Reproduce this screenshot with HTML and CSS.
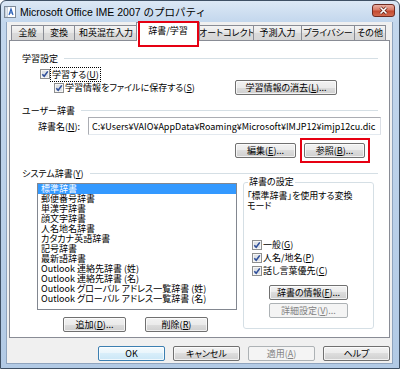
FILE: index.html
```html
<!DOCTYPE html>
<html lang="ja">
<head>
  <meta charset="UTF-8">
  <title>Microsoft Office IME 2007 のプロパティ</title>
  <link rel="stylesheet" href="styles.css">
</head>
<body>
  <svg class="defs" width="0" height="0">
    <symbol id="checked" viewBox="0 0 10 10">
      <rect x="0.5" y="0.5" width="9" height="9" fill="#f6f6f6" stroke="#8e8f8f"/>
      <rect x="2" y="2" width="6" height="6" fill="#dfe2e6"/>
      <path d="M2.3 5.2 L4.2 7.3 L7.8 2.4" fill="none" stroke="#2f4f9a" stroke-width="1.6"/>
    </symbol>
  </svg>

  <div class="window">
    <div class="titlebar">
      <svg class="app-icon" viewBox="0 0 12 12">
        <rect x="0.5" y="0.5" width="11" height="11" fill="#fff" stroke="#7d8a99"/>
        <rect x="1" y="1" width="3" height="10" fill="#c9d3de"/>
        <path d="M2 3h1M2 5h1M2 7h1M2 9h1" stroke="#fff"/>
        <path d="M5 9 L7 3 L9 9 M6 7h2" fill="none" stroke="#2d62b8" stroke-width="1.2"/>
      </svg>
      <span class="title">Microsoft Office IME 2007 のプロパティ</span>
      <div class="close-btn">
        <svg viewBox="0 0 23 13" width="23" height="13">
          <path d="M8.5 3.5 L14.5 9.5 M14.5 3.5 L8.5 9.5" stroke="#5a1d14" stroke-width="3"/>
          <path d="M8.5 3.5 L14.5 9.5 M14.5 3.5 L8.5 9.5" stroke="#fff" stroke-width="1.6"/>
        </svg>
      </div>
    </div>

    <div class="dialog">
      <div class="tabs">
        <div class="tab tab-general">全般</div>
        <div class="tab tab-convert">変換</div>
        <div class="tab tab-mixed">和英混在入力</div>
        <div class="tab tab-dict active">辞書/学習</div>
        <div class="tab tab-autocorrect">オートコレクト</div>
        <div class="tab tab-predict">予測入力</div>
        <div class="tab tab-privacy">プライバシー</div>
        <div class="tab tab-other">その他</div>
      </div>

      <div class="panel">
        <div class="group-head"><span>学習設定</span><i class="rule"></i></div>
        <div class="check learn-main">
          <svg class="cb"><use href="#checked"/></svg>
          <span class="focused">学習する(<u>U</u>)</span>
        </div>
        <div class="learn-row">
          <div class="check learn-sub">
            <svg class="cb"><use href="#checked"/></svg>
            <span>学習情報をファイルに保存する(<u>S</u>)</span>
          </div>
          <button class="btn btn-clear">学習情報の消去(<u>L</u>)...</button>
        </div>

        <div class="group-head user-head"><span>ユーザー辞書</span><i class="rule"></i></div>
        <div class="name-row">
          <span class="name-label">辞書名(<u>N</u>):</span>
          <input class="textbox" type="text" value="C:¥Users¥VAIO¥AppData¥Roaming¥Microsoft¥IMJP12¥imjp12cu.dic" readonly>
        </div>
        <div class="user-buttons">
          <button class="btn btn-small">編集(<u>E</u>)...</button>
          <button class="btn btn-small">参照(<u>B</u>)...</button>
        </div>

        <div class="group-head system-head"><span>システム辞書(<u>Y</u>)</span><i class="rule"></i></div>
        <div class="system-row">
          <div class="system-list">
            <ul class="listbox">
              <li class="selected">標準辞書</li>
              <li>郵便番号辞書</li>
              <li>単漢字辞書</li>
              <li>顔文字辞書</li>
              <li>人名地名辞書</li>
              <li>カタカナ英語辞書</li>
              <li>記号辞書</li>
              <li>最新語辞書</li>
              <li>Outlook 連絡先辞書 (姓)</li>
              <li>Outlook 連絡先辞書 (名)</li>
              <li>Outlook グローバル アドレス一覧辞書 (姓)</li>
              <li>Outlook グローバル アドレス一覧辞書 (名)</li>
            </ul>
            <div class="list-buttons">
              <button class="btn btn-list">追加(<u>D</u>)...</button>
              <button class="btn btn-list">削除(<u>R</u>)</button>
            </div>
          </div>

          <fieldset class="dict-settings">
            <legend>辞書の設定</legend>
            <p class="mode-text">「標準辞書」を使用する変換<br>モード</p>
            <div class="check mode-check first">
              <svg class="cb"><use href="#checked"/></svg>
              <span>一般(<u>G</u>)</span>
            </div>
            <div class="check mode-check">
              <svg class="cb"><use href="#checked"/></svg>
              <span>人名/地名(<u>P</u>)</span>
            </div>
            <div class="check mode-check">
              <svg class="cb"><use href="#checked"/></svg>
              <span>話し言葉優先(<u>C</u>)</span>
            </div>
            <button class="btn btn-info">辞書の情報(<u>F</u>)...</button>
            <button class="btn btn-info btn-detail" disabled>詳細設定(<u>V</u>)...</button>
          </fieldset>
        </div>
      </div>

      <div class="footer">
        <button class="btn btn-footer btn-default">OK</button>
        <button class="btn btn-footer">キャンセル</button>
        <button class="btn btn-footer" disabled>適用(<u>A</u>)</button>
        <button class="btn btn-footer">ヘルプ</button>
      </div>
    </div>

    <div class="mark mark-tab"></div>
    <div class="mark mark-browse"></div>
  </div>
</body>
</html>
```

FILE: styles.css
```css
body {
  margin: 0;
  font-family: "Noto Sans CJK JP", sans-serif;
  font-size: 9px;
  font-feature-settings: "palt";
  color: #000;
}
.defs { position: absolute; }

.window {
  position: relative;
  width: 400px;
  height: 369px;
  box-sizing: border-box;
  border: 1px solid #3f5064;
  border-radius: 6px 6px 0 0;
  background: linear-gradient(#dce8f5, #c3d7ed 21px, #b2cae5 100%);
  display: flex;
  flex-direction: column;
  overflow: hidden;
}

/* title bar */
.titlebar {
  height: 21px;
  display: flex;
  align-items: center;
  padding: 0 4px 0 3px;
}
.app-icon {
  width: 12px;
  height: 12px;
  margin-right: 4px;
}
.title {
  flex: 1;
  font-family: "Liberation Sans", "Noto Sans CJK JP", sans-serif;
  font-size: 10.5px;
  font-feature-settings: normal;
}
.close-btn {
  align-self: flex-start;
  margin-top: 3px;
  width: 23px;
  height: 13px;
  box-sizing: border-box;
  border: 1px solid #6e2b22;
  border-radius: 3px;
  background: linear-gradient(#eab1a4, #d97a66 45%, #c44a30 55%, #d26a4f);
  display: flex;
}
.close-btn svg { margin: -1px; }

/* dialog body */
.dialog {
  flex: 1;
  margin: 0 6px 4px 5px;
  background: #f0f0f0;
  border: 1px solid #8fa4be;
  border-top: none;
  padding: 0 2px;
  display: flex;
  flex-direction: column;
}

.tabs {
  height: 18px;
  display: flex;
  align-items: flex-end;
  padding-left: 2px;
}
.tab {
  height: 15px;
  box-sizing: border-box;
  padding: 0;
  border: 1px solid #898c95;
  border-bottom: none;
  margin-right: -1px;
  background: linear-gradient(#f4f4f4, #e6e6e6 50%, #dadada 50%, #d6d6d6);
  line-height: 14px;
  text-align: center;
  white-space: nowrap;
}
.tab-general { width: 33px; }
.tab-convert { width: 32px; }
.tab-mixed { width: 64px; }
.tab-dict { width: 64px; }
.tab-autocorrect { width: 56px; }
.tab-predict { width: 49px; }
.tab-privacy { width: 54px; }
.tab-other { width: 32px; }
.tab.active {
  position: relative;
  z-index: 1;
  height: 19px;
  margin: 0 -2px -1px -1px;
  background: #fff;
  line-height: 15px;
}

.panel {
  height: 298px;
  box-sizing: border-box;
  background: #fff;
  border: 1px solid #898c95;
  padding: 0 11px 0 12px;
}

.group-head {
  display: flex;
  align-items: center;
  gap: 6px;
  height: 12px;
  margin-top: 11px;
}
.group-head .rule {
  flex: 1;
  border-top: 1px solid #d5dfe5;
}
.user-head, .system-head { margin-top: 9px; }

.check {
  display: flex;
  align-items: center;
  height: 12px;
  white-space: nowrap;
}
.cb {
  width: 10px;
  height: 10px;
  margin-right: 1px;
  flex: none;
}
.learn-main {
  margin: 4px 0 0 18px;
}
.focused {
  outline: 1px dotted #000;
  outline-offset: 0;
  padding: 0 1px;
}
.learn-row {
  display: flex;
  align-items: center;
  height: 15px;
}
.learn-sub { margin-left: 32px; }

.btn {
  height: 15px;
  box-sizing: border-box;
  padding: 0;
  border: 1px solid #707070;
  border-radius: 2px;
  background: linear-gradient(#f2f2f2, #ebebeb 50%, #dddddd 50%, #cfcfcf);
  box-shadow: inset 0 0 0 1px rgba(255, 255, 255, 0.7);
  font: inherit;
  font-feature-settings: "palt";
  line-height: 12px;
  color: #000;
  white-space: nowrap;
}
.btn:disabled {
  border-color: #adb2b5;
  background: #f4f4f4;
  box-shadow: none;
  color: #838383;
}
.btn-default {
  border-color: #3c7fb1;
  background: linear-gradient(#f4fafd, #e8f5fc 50%, #d8eefa 50%, #cbe7f7);
}
.btn-clear {
  width: 102px;
  margin: 0 41px 0 auto;
}

.name-row {
  display: flex;
  align-items: center;
  margin-top: 1px;
}
.name-label {
  width: 50px;
  margin-left: 16px;
  white-space: nowrap;
}
.textbox {
  flex: 1;
  min-width: 0;
  height: 18px;
  box-sizing: border-box;
  margin: 0 -3px 0 0;
  padding: 0 3px;
  border: 1px solid #abadb3;
  border-right-color: #dbdfe6;
  border-bottom-color: #e3e9ef;
  font: inherit;
  font-feature-settings: normal;
  color: #000;
  background: #fff;
}
.user-buttons {
  display: flex;
  justify-content: flex-end;
  gap: 8px;
  margin-top: 8px;
  padding-right: 13px;
}
.btn-small { width: 61px; }

.system-row {
  display: flex;
  align-items: flex-start;
  margin-top: -3px;
}
.system-list {
  width: 200px;
  margin-left: 15px;
}
.listbox {
  list-style: none;
  margin: 7px 0 0;
  padding: 0;
  height: 127px;
  box-sizing: border-box;
  border: 1px solid #828790;
  overflow: hidden;
}
.listbox li {
  height: 10px;
  line-height: 10px;
  padding-left: 3px;
  white-space: nowrap;
}
.listbox li.selected {
  background: #3399ff;
  color: #fff;
}
.list-buttons {
  display: flex;
  gap: 19px;
  margin-top: 7px;
  padding-left: 26px;
}
.btn-list { width: 63px; }

.dict-settings {
  width: 131px;
  box-sizing: border-box;
  min-width: 0;
  margin: 0 0 0 6px;
  padding: 3px 3px 10px 3px;
  border: 1px solid #d5dfe5;
  border-radius: 3px;
  display: flex;
  flex-direction: column;
}
.dict-settings legend {
  padding: 0 1px;
  margin-left: 1px;
  line-height: 12px;
}
.mode-text {
  margin: 0;
  line-height: 10px;
}
.mode-check {
  height: 13px;
  margin-left: 5px;
}
.mode-check.first { margin-top: 27px; }
.btn-info {
  width: 79px;
  align-self: center;
  margin-top: 8px;
}
.btn-detail { margin-top: 3px; }

.footer {
  display: flex;
  justify-content: flex-end;
  gap: 8px;
  margin-top: 8px;
}
.btn-footer { width: 67px; }

/* red highlight frames */
.mark {
  position: absolute;
  box-sizing: border-box;
  border: 2px solid #e60012;
  z-index: 2;
}
.mark-tab {
  left: 137px;
  top: 20px;
  width: 61px;
  height: 26px;
}
.mark-browse {
  left: 299px;
  top: 137px;
  width: 70px;
  height: 25px;
}
```
